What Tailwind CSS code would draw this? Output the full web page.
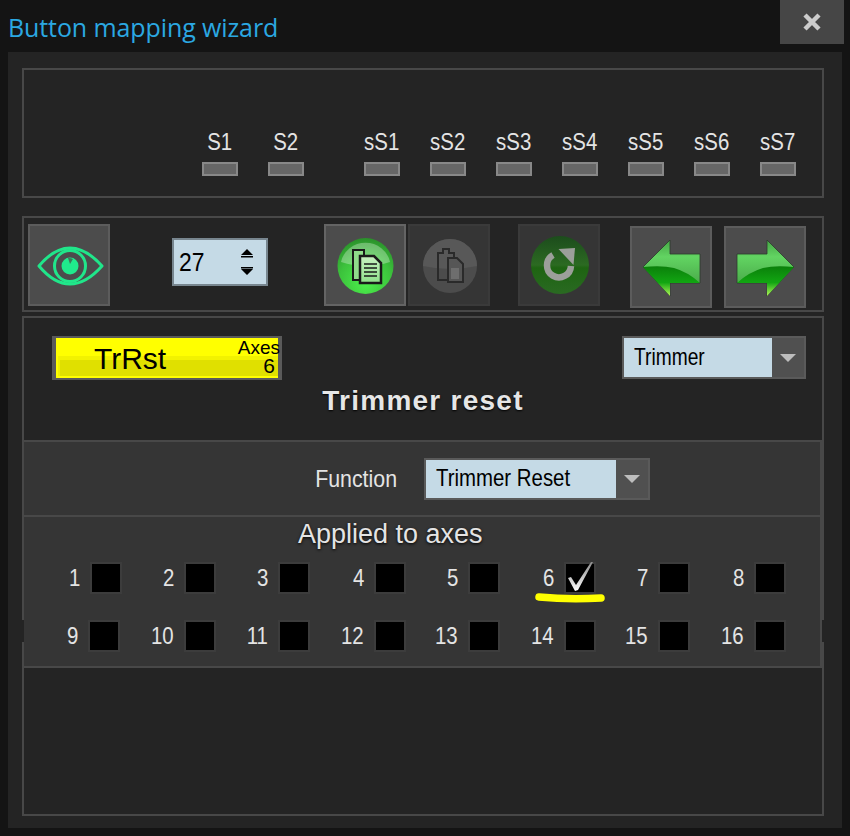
<!DOCTYPE html>
<html lang="en">
<head>
  <meta charset="UTF-8" />
  <title>Button mapping wizard</title>
  <script src="https://cdn.jsdelivr.net/npm/@tailwindcss/browser@4"></script>
</head>
<body class="bg-[#141414] w-[850px] h-[836px] overflow-hidden text-[#e4e4e4] text-[24px] leading-none font-['Liberation_Sans',sans-serif]">

  <!-- title bar -->
  <div class="h-[52px] flex justify-between items-start">
    <div class="ml-[8px] mt-[12px] text-[25px] leading-[30px] tracking-[-0.1px] text-[#2ba8e2] font-['Open_Sans',sans-serif]">Button mapping wizard</div>
    <button class="w-[64px] h-[44px] mr-[6px] bg-[#464646] flex items-center justify-center">
      <svg width="18" height="18" viewBox="0 0 18 18"><path d="M2 2 L16 16 M16 2 L2 16" stroke="#cccccc" stroke-width="4.5"/></svg>
    </button>
  </div>

  <div class="ml-[8px] w-[834px] h-[776px] bg-[#242424] pl-[14px] pr-[18px] pt-[16px]">

    <!-- shift indicators -->
    <div class="h-[130px] border-2 border-[#484848] flex pl-[178px] pt-[60px]">
      <div class="w-[36px] mr-[30px] flex flex-col items-center"><span class="h-[32px] leading-[24px] scale-x-[.85]">S1</span><span class="w-[36px] h-[14px] border-2 border-[#888888] bg-[#666666]"></span></div>
      <div class="w-[36px] mr-[60px] flex flex-col items-center"><span class="h-[32px] leading-[24px] scale-x-[.85]">S2</span><span class="w-[36px] h-[14px] border-2 border-[#888888] bg-[#666666]"></span></div>
      <div class="w-[36px] mr-[30px] flex flex-col items-center"><span class="h-[32px] leading-[24px] scale-x-[.85]">sS1</span><span class="w-[36px] h-[14px] border-2 border-[#888888] bg-[#666666]"></span></div>
      <div class="w-[36px] mr-[30px] flex flex-col items-center"><span class="h-[32px] leading-[24px] scale-x-[.85]">sS2</span><span class="w-[36px] h-[14px] border-2 border-[#888888] bg-[#666666]"></span></div>
      <div class="w-[36px] mr-[30px] flex flex-col items-center"><span class="h-[32px] leading-[24px] scale-x-[.85]">sS3</span><span class="w-[36px] h-[14px] border-2 border-[#888888] bg-[#666666]"></span></div>
      <div class="w-[36px] mr-[30px] flex flex-col items-center"><span class="h-[32px] leading-[24px] scale-x-[.85]">sS4</span><span class="w-[36px] h-[14px] border-2 border-[#888888] bg-[#666666]"></span></div>
      <div class="w-[36px] mr-[30px] flex flex-col items-center"><span class="h-[32px] leading-[24px] scale-x-[.85]">sS5</span><span class="w-[36px] h-[14px] border-2 border-[#888888] bg-[#666666]"></span></div>
      <div class="w-[36px] mr-[30px] flex flex-col items-center"><span class="h-[32px] leading-[24px] scale-x-[.85]">sS6</span><span class="w-[36px] h-[14px] border-2 border-[#888888] bg-[#666666]"></span></div>
      <div class="w-[36px] flex flex-col items-center"><span class="h-[32px] leading-[24px] scale-x-[.85]">sS7</span><span class="w-[36px] h-[14px] border-2 border-[#888888] bg-[#666666]"></span></div>
    </div>

    <!-- toolbar -->
    <div class="mt-[18px] h-[96px] border-2 border-[#484848] flex items-start pl-[4px] pt-[6px]">
      <button class="w-[82px] h-[82px] border-2 border-[#5c5c5c] bg-[#4c4c4c] flex items-center justify-center">
        <svg width="78" height="78" viewBox="0 0 78 78">
          <path d="M9 40 Q24 22 40 22 Q56 22 72 40 Q56 58 40 58 Q24 58 9 40 Z" fill="none" stroke="#20e68a" stroke-width="3" stroke-linejoin="round"/>
          <circle cx="40" cy="40" r="15.5" fill="none" stroke="#20e68a" stroke-width="3"/>
          <circle cx="40" cy="40" r="8.5" fill="#20ea8c"/>
          <path d="M38 32 A8 8 0 0 1 43 33 L40 38 Z" fill="#3a7a5a"/>
        </svg>
      </button>

      <div class="ml-[62px] mt-[14px] w-[96px] h-[48px] border-2 border-[#78868f] bg-[#c5dae6] flex items-center justify-between pl-[5px] pr-[12px] text-black text-[26px]">
        <span class="origin-left scale-x-[.88]">27</span>
        <svg width="14" height="28" viewBox="0 0 14 28"><path d="M7 1 L13 7 L1 7 Z M1 8 H13 V9.5 H1 Z M1 19 H13 V20.5 H1 Z M1 21 H13 L7 27 Z" fill="#000"/></svg>
      </div>

      <button class="ml-[56px] w-[82px] h-[82px] border-2 border-[#646464] bg-[#4c4c4c] flex items-center justify-center">
        <svg width="78" height="78" viewBox="0 0 78 78">
          <defs>
            <radialGradient id="greenBall" cx="0.5" cy="0.8" r="0.8">
              <stop offset="0" stop-color="#4cf04c"/><stop offset="0.6" stop-color="#3cc23c"/><stop offset="1" stop-color="#2a8f2a"/>
            </radialGradient>
            <linearGradient id="docFill" x1="0" y1="0" x2="0" y2="1">
              <stop offset="0" stop-color="#c8f0c0"/><stop offset="1" stop-color="#8fe08a"/>
            </linearGradient>
          </defs>
          <circle cx="39.5" cy="40" r="28" fill="url(#greenBall)"/>
          <path d="M15 36 A25 24 0 0 1 64 36 Q39.5 44 15 36 Z" fill="#ffffff" opacity="0.3"/>
          <path d="M27 24 H38 V54 H27 Z" fill="#8fdc8a" stroke="#1a1a1a" stroke-width="2"/>
          <path d="M34 30 H48 L55 37 V57 H34 Z" fill="url(#docFill)" stroke="#1a1a1a" stroke-width="2.5"/>
          <path d="M38 38 H51 M38 42 H51 M38 46 H51 M38 50 H51" stroke="#1a1a1a" stroke-width="1.6"/>
        </svg>
      </button>

      <button class="ml-[2px] w-[82px] h-[82px] border-2 border-[#3a3a3a] bg-[#353535] flex items-center justify-center">
        <svg width="78" height="78" viewBox="0 0 78 78">
          <circle cx="40" cy="40" r="27" fill="#4c4c4c"/>
          <path d="M13 40 A27 27 0 0 1 67 40 Q40 46 13 40 Z" fill="#585858"/>
          <path d="M28 27 H33 V23 H39 V27 H44 V54 H28 Z" fill="none" stroke="#2a2a2a" stroke-width="2"/>
          <path d="M38 32 H47 L53 38 V56 H38 Z" fill="#565656" stroke="#2a2a2a" stroke-width="2"/>
          <path d="M41 42 H49 V53 H41 Z" fill="#6e6e6e"/>
        </svg>
      </button>

      <button class="ml-[28px] w-[82px] h-[82px] border-2 border-[#3a3a3a] bg-[#353535] flex items-center justify-center">
        <svg width="78" height="78" viewBox="0 0 78 78">
          <defs>
            <linearGradient id="darkBall" x1="0" y1="0" x2="0" y2="1">
              <stop offset="0" stop-color="#1c4c1c"/><stop offset="0.5" stop-color="#2c6a22"/><stop offset="0.55" stop-color="#1e6412"/><stop offset="1" stop-color="#2a6a22"/>
            </linearGradient>
          </defs>
          <circle cx="40" cy="39" r="29" fill="url(#darkBall)"/>
          <path d="M33 29 A12 12 0 1 0 51 40" fill="none" stroke="#9c9f9a" stroke-width="6.5"/>
          <path d="M38.5 23 L55 22 L53.5 39 Z" fill="#9c9f9a"/>
        </svg>
      </button>

      <button class="ml-[30px] mt-[2px] w-[82px] h-[82px] border-2 border-[#5c5c5c] bg-[#4c4c4c] flex items-center justify-center">
        <svg width="78" height="78" viewBox="0 0 78 78">
          <defs>
            <linearGradient id="arrowTop" x1="0" y1="0" x2="0" y2="1">
              <stop offset="0" stop-color="#45a545"/><stop offset="0.3" stop-color="#62d462"/><stop offset="1" stop-color="#3f983f"/>
            </linearGradient>
            <linearGradient id="arrowLow" x1="0" y1="0" x2="0" y2="1">
              <stop offset="0" stop-color="#0a7f0a"/><stop offset="0.55" stop-color="#12a612"/><stop offset="1" stop-color="#b4f55a"/>
            </linearGradient>
          </defs>
          <path d="M11 39 L38 12 V26 H68 V55 H38 V68 Z" fill="url(#arrowTop)" stroke="#2c3a2c" stroke-width="0.8"/>
          <path d="M11 39 Q30 37 42 40 Q56 44 68 55 H38 V68 Z" fill="url(#arrowLow)"/>
        </svg>
      </button>

      <button class="ml-[12px] mt-[2px] w-[82px] h-[82px] border-2 border-[#5c5c5c] bg-[#4c4c4c] flex items-center justify-center">
        <svg width="78" height="78" viewBox="0 0 78 78">
          <g transform="translate(79 0) scale(-1 1)">
            <path d="M11 39 L38 12 V26 H68 V55 H38 V68 Z" fill="url(#arrowTop)" stroke="#2c3a2c" stroke-width="0.8"/>
            <path d="M11 39 Q30 37 42 40 Q56 44 68 55 H38 V68 Z" fill="url(#arrowLow)"/>
          </g>
        </svg>
      </button>
    </div>

    <!-- mapping panel -->
    <div class="relative mt-[4px] h-[500px] border-2 border-[#484848]">
      <span class="absolute left-[-2px] top-[302px] w-[2px] h-[22px] bg-[#242424]"></span>
      <span class="absolute right-[-2px] top-[302px] w-[2px] h-[22px] bg-[#242424]"></span>

      <div class="h-[122px] flex flex-col">
        <div class="flex justify-between items-start pl-[28px] pr-[16px] pt-[18px]">
          <div class="relative w-[230px] h-[44px] border-y-2 border-x-4 border-[#5a5a5a] bg-[#ffff00] text-black">
            <span class="absolute left-[2px] right-0 top-[18px] h-[20px] bg-[#f2f200]"></span>
            <span class="absolute left-[4px] right-0 top-[22px] h-[16px] bg-[#e0e000]"></span>
            <span class="absolute left-[38px] top-[6px] text-[30px] leading-[30px]">TrRst</span>
            <span class="absolute right-[-2px] top-0 text-[19px] leading-[19px]">Axes</span>
            <span class="absolute right-[3px] top-[19px] text-[21px] leading-[18px]">6</span>
          </div>
          <div class="w-[184px] h-[43px] border-2 border-[#5a5a5a] flex">
            <div class="flex-1 bg-[#c5dae6] text-black pl-[10px] leading-[37px]"><span class="inline-block origin-left scale-x-[.8]">Trimmer</span></div>
            <div class="w-[32px] bg-[#505050] flex items-center justify-center">
              <svg width="16" height="8" viewBox="0 0 16 8"><path d="M0 0 H16 L8 8 Z" fill="#bdbdbd"/></svg>
            </div>
          </div>
        </div>
        <div class="mt-[6px] text-center text-[28px] leading-[30px] tracking-[1.25px] font-bold text-[#e6e6e6] [text-shadow:0_1px_2px_#000]">Trimmer reset</div>
      </div>

      <div class="relative h-[228px] bg-[#353535] border-t-2 border-r-2 border-b-2 border-[#484848]">
        <div class="h-[75px] border-b-2 border-[#484848] flex items-start">
          <div class="w-[400px] pr-[27px] pt-[25px] text-right"><span class="inline-block origin-right scale-x-[.89]">Function</span></div>
          <div class="mt-[16px] w-[226px] h-[42px] border-2 border-[#5a5a5a] flex">
            <div class="flex-1 bg-[#c5dae6] text-black pl-[10px] leading-[36px]"><span class="inline-block origin-left scale-x-[.85]">Trimmer Reset</span></div>
            <div class="w-[32px] bg-[#505050] flex items-center justify-center">
              <svg width="16" height="8" viewBox="0 0 16 8"><path d="M0 0 H16 L8 8 Z" fill="#bdbdbd"/></svg>
            </div>
          </div>
        </div>

        <div class="pl-[274px] pt-[2px] text-[27px] leading-[30px] [text-shadow:0_1px_3px_#000]">Applied to axes</div>

        <!-- axis checkboxes -->
        <div class="mt-[15px] flex items-center">
          <div class="w-[96px] flex justify-end items-center gap-[12px]"><span class="origin-right scale-x-[.85]">1</span><span class="w-[28px] h-[28px] bg-black ring-2 ring-[#3c3c3c]"></span></div>
          <div class="w-[94px] flex justify-end items-center gap-[12px]"><span class="origin-right scale-x-[.85]">2</span><span class="w-[28px] h-[28px] bg-black ring-2 ring-[#3c3c3c]"></span></div>
          <div class="w-[94px] flex justify-end items-center gap-[12px]"><span class="origin-right scale-x-[.85]">3</span><span class="w-[28px] h-[28px] bg-black ring-2 ring-[#3c3c3c]"></span></div>
          <div class="w-[96px] flex justify-end items-center gap-[12px]"><span class="origin-right scale-x-[.85]">4</span><span class="w-[28px] h-[28px] bg-black ring-2 ring-[#3c3c3c]"></span></div>
          <div class="w-[94px] flex justify-end items-center gap-[12px]"><span class="origin-right scale-x-[.85]">5</span><span class="w-[28px] h-[28px] bg-black ring-2 ring-[#3c3c3c]"></span></div>
          <div class="w-[96px] flex justify-end items-center gap-[12px]"><span class="origin-right scale-x-[.85]">6</span>
            <span class="relative w-[28px] h-[28px] bg-black ring-2 ring-[#3c3c3c]">
              <svg class="absolute left-0 top-0 overflow-visible" width="28" height="28" viewBox="0 0 28 28">
                <defs><linearGradient id="tick" x1="0" y1="0" x2="0" y2="1"><stop offset="0" stop-color="#8a8a8a"/><stop offset="1" stop-color="#ffffff"/></linearGradient></defs>
                <path d="M2 14 L5 13 L10 21 L25 -2 L27 -2 L12 26 L9 27 Z" fill="url(#tick)"/>
              </svg>
            </span>
          </div>
          <div class="w-[94px] flex justify-end items-center gap-[12px]"><span class="origin-right scale-x-[.85]">7</span><span class="w-[28px] h-[28px] bg-black ring-2 ring-[#3c3c3c]"></span></div>
          <div class="w-[96px] flex justify-end items-center gap-[12px]"><span class="origin-right scale-x-[.85]">8</span><span class="w-[28px] h-[28px] bg-black ring-2 ring-[#3c3c3c]"></span></div>
        </div>
        <div class="mt-[30px] flex items-center">
          <div class="w-[94px] flex justify-end items-center gap-[12px]"><span class="origin-right scale-x-[.85]">9</span><span class="w-[28px] h-[28px] bg-black ring-2 ring-[#3c3c3c]"></span></div>
          <div class="w-[96px] flex justify-end items-center gap-[12px]"><span class="origin-right scale-x-[.85]">10</span><span class="w-[28px] h-[28px] bg-black ring-2 ring-[#3c3c3c]"></span></div>
          <div class="w-[94px] flex justify-end items-center gap-[12px]"><span class="origin-right scale-x-[.85]">11</span><span class="w-[28px] h-[28px] bg-black ring-2 ring-[#3c3c3c]"></span></div>
          <div class="w-[96px] flex justify-end items-center gap-[12px]"><span class="origin-right scale-x-[.85]">12</span><span class="w-[28px] h-[28px] bg-black ring-2 ring-[#3c3c3c]"></span></div>
          <div class="w-[94px] flex justify-end items-center gap-[12px]"><span class="origin-right scale-x-[.85]">13</span><span class="w-[28px] h-[28px] bg-black ring-2 ring-[#3c3c3c]"></span></div>
          <div class="w-[96px] flex justify-end items-center gap-[12px]"><span class="origin-right scale-x-[.85]">14</span><span class="w-[28px] h-[28px] bg-black ring-2 ring-[#3c3c3c]"></span></div>
          <div class="w-[94px] flex justify-end items-center gap-[12px]"><span class="origin-right scale-x-[.85]">15</span><span class="w-[28px] h-[28px] bg-black ring-2 ring-[#3c3c3c]"></span></div>
          <div class="w-[96px] flex justify-end items-center gap-[12px]"><span class="origin-right scale-x-[.85]">16</span><span class="w-[28px] h-[28px] bg-black ring-2 ring-[#3c3c3c]"></span></div>
        </div>

        <!-- hand drawn highlight under axis 6 -->
        <svg class="absolute left-[511px] top-[151px]" width="70" height="10" viewBox="0 0 70 10">
          <path d="M4 4 Q34 7 66 5" fill="none" stroke="#ffff00" stroke-width="7.5" stroke-linecap="round"/>
        </svg>
      </div>
    </div>
  </div>
</body>
</html>
